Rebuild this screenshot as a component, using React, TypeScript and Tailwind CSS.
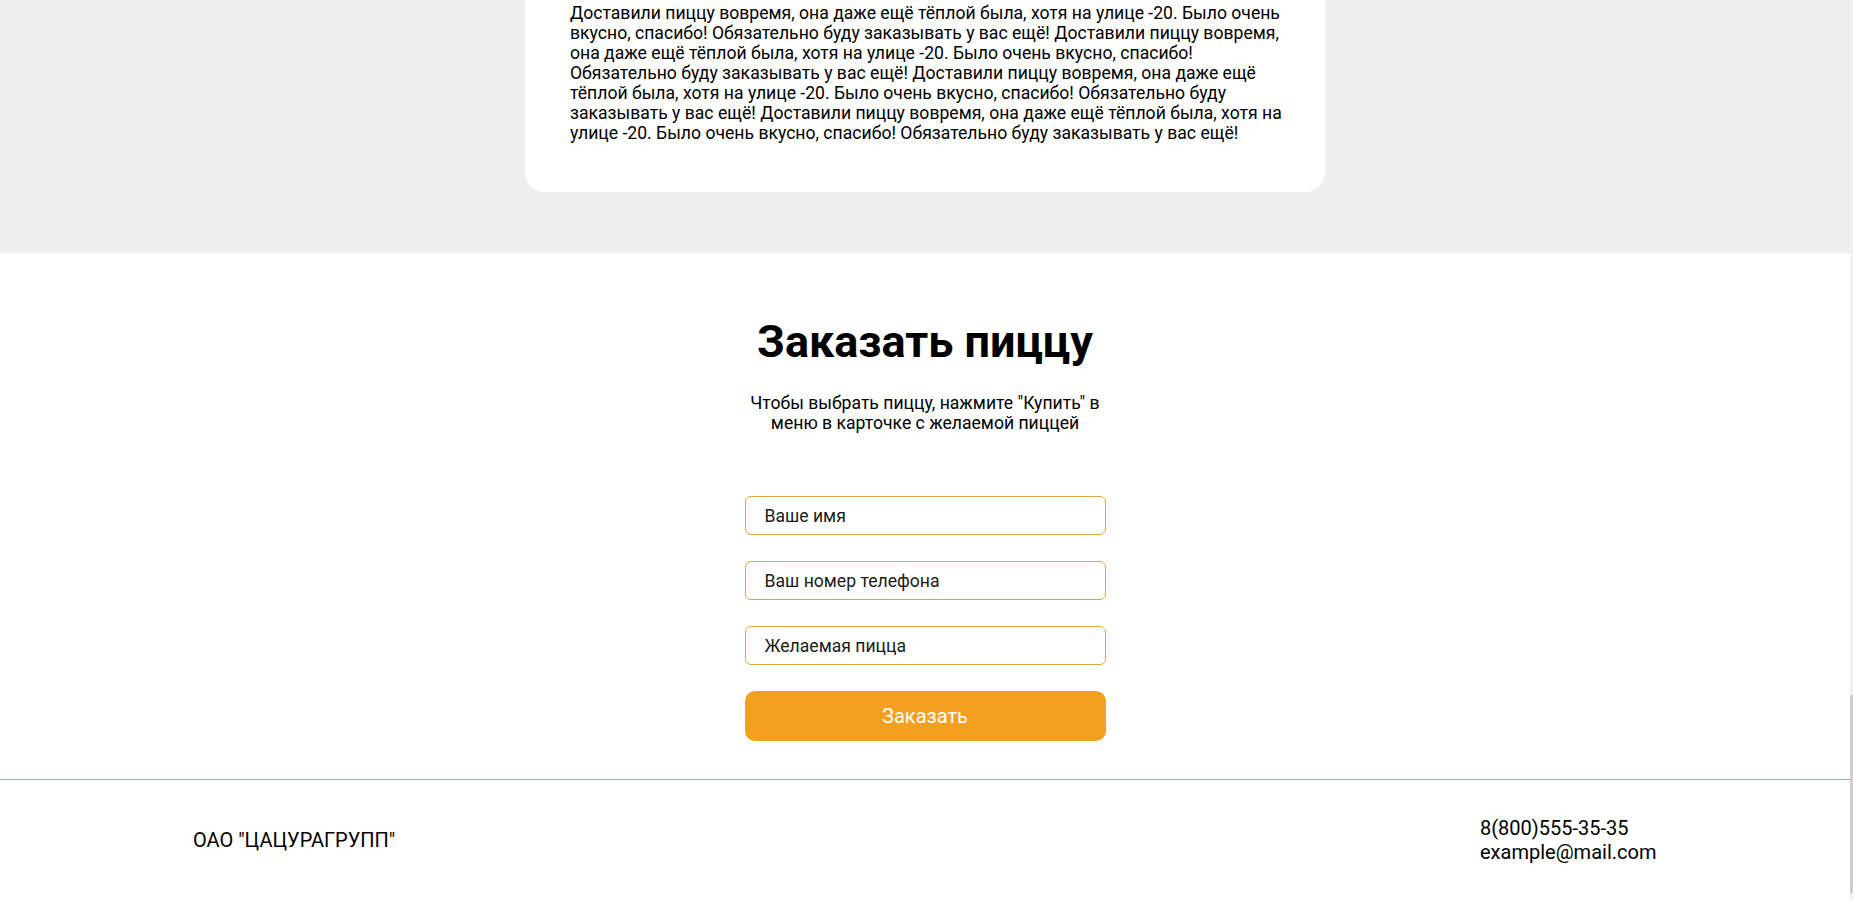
import React from "react";

const reviewText =
  "Доставили пиццу вовремя, она даже ещё тёплой была, хотя на улице -20. Было очень вкусно, спасибо! Обязательно буду заказывать у вас ещё! Доставили пиццу вовремя, она даже ещё тёплой была, хотя на улице -20. Было очень вкусно, спасибо! Обязательно буду заказывать у вас ещё! Доставили пиццу вовремя, она даже ещё тёплой была, хотя на улице -20. Было очень вкусно, спасибо! Обязательно буду заказывать у вас ещё! Доставили пиццу вовремя, она даже ещё тёплой была, хотя на улице -20. Было очень вкусно, спасибо! Обязательно буду заказывать у вас ещё!";

const fields = ["Ваше имя", "Ваш номер телефона", "Желаемая пицца"];

const ReviewCard = () => (
  <section className="h-[253px] bg-[#eeeeee]">
    <div className="mx-auto w-[800px] rounded-b-[20px] bg-white pb-[49px] pl-[45px] pr-[38px] pt-[3px]">
      <p className="text-[17.6px] leading-5 text-black">{reviewText}</p>
    </div>
  </section>
);

const OrderForm = () => (
  <section className="flex flex-col items-center border-b border-[#d8a54d] pb-[38px] pt-[62px]">
    <h2 className="text-[45px] font-bold leading-[53px] text-black">Заказать пиццу</h2>
    <p className="mt-[25px] w-[370px] text-center text-[17.6px] leading-5 text-black">
      Чтобы выбрать пиццу, нажмите "Купить" в меню в карточке с желаемой пиццей
    </p>
    <form className="mt-[63px] flex w-[361px] flex-col gap-[26px]">
      {fields.map((f) => (
        <input
          key={f}
          type="text"
          placeholder={f}
          className="h-[39px] rounded-[6px] border border-[#dfa73c] bg-white pl-[19px] text-[17.6px] text-black outline-none placeholder:text-[#1a1a1a]"
        />
      ))}
      <button
        type="button"
        className="h-[50px] rounded-[10px] bg-[#f39f1f] text-[20px] leading-6 text-white"
      >
        Заказать
      </button>
    </form>
  </section>
);

const Footer = () => (
  <footer className="flex h-[121px] items-center">
    <div className="mx-auto flex w-[1464px] items-center justify-between text-[20px] leading-[23.5px] text-black">
      <span>ОАО "ЦАЦУРАГРУПП"</span>
      <div className="flex w-[177px] flex-col">
        <span>8(800)555-35-35</span>
        <span>example@mail.com</span>
      </div>
    </div>
  </footer>
);

export default function App() {
  return (
    <div
      className="flex h-[900px] overflow-hidden bg-white"
      style={{ fontFamily: "Roboto, 'Noto Sans', sans-serif" }}
    >
      <main className="flex-1">
        <ReviewCard />
        <OrderForm />
        <Footer />
      </main>
      <div className="flex w-[3px] flex-col bg-[#f0f0f0]">
        <div className="flex-1" />
        <div className="h-[198px] bg-[#cdcdcd]" />
        <div className="h-[7px]" />
      </div>
    </div>
  );
}
